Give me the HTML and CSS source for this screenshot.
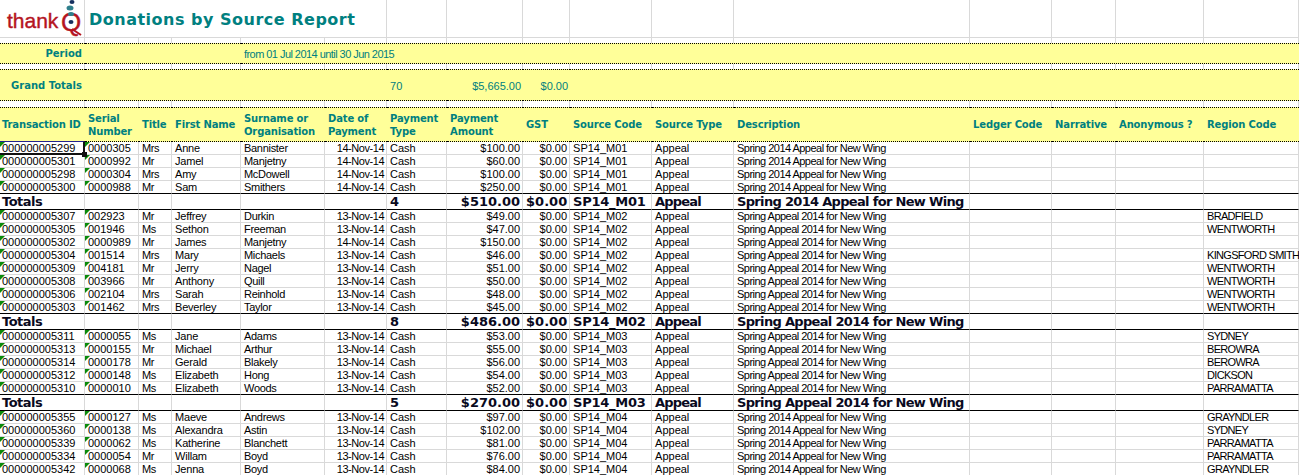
FILE: index.html
```html
<!DOCTYPE html>
<html lang="en">
<head>
  <meta charset="UTF-8">
  <title>Donations by Source Report</title>
  <link rel="stylesheet" href="styles.css">
</head>
<body>
  <table class="sheet">
    <colgroup>
      <col class="c85"><col class="c54"><col class="c33"><col class="c69"><col class="c84"><col class="c62"><col class="c60"><col class="c76">
      <col class="c47"><col class="c82"><col class="c82"><col class="c236"><col class="c82"><col class="c64"><col class="c88"><col class="c95">
    </colgroup>

    <!-- report heading -->
    <tr class="title-row">
      <td>
        <svg class="logo" width="84" height="37" viewBox="0 0 84 37">
          <text class="logo-text" x="7" y="28">thank</text>
          <text class="logo-text logo-q" x="61" y="31">Q</text>
          <path class="logo-tail" d="M72 29 L81 35"/>
          <ellipse class="logo-dot" cx="72" cy="2" rx="2.5" ry="2"/>
          <ellipse class="logo-dot-teal" cx="70" cy="8" rx="3.5" ry="2.5"/>
          <ellipse class="logo-dot-teal" cx="71" cy="14" rx="3" ry="2"/>
          <ellipse class="logo-dot" cx="71" cy="22" rx="2.5" ry="2"/>
        </svg>
      </td>
      <td colspan="5" class="report-title">Donations by Source Report</td>
      <td></td><td></td><td></td><td></td><td></td><td></td><td></td><td></td><td></td><td></td>
    </tr>
    <tr class="gap g5"><td></td><td></td><td></td><td></td><td></td><td></td><td></td><td></td><td></td><td></td><td></td><td></td><td></td><td></td><td></td><td></td></tr>

    <tr class="band band-period">
      <td class="lbl">Period</td>
      <td colspan="3"></td>
      <td colspan="12" class="val">from 01 Jul 2014 until 30 Jun 2015</td>
    </tr>
    <tr class="gap g5"><td></td><td></td><td></td><td></td><td></td><td></td><td></td><td></td><td></td><td></td><td></td><td></td><td></td><td></td><td></td><td></td></tr>

    <tr class="band band-totals">
      <td class="lbl">Grand Totals</td>
      <td colspan="5"></td>
      <td class="val">70</td>
      <td class="val num">$5,665.00</td>
      <td class="val num">$0.00</td>
      <td colspan="7"></td>
    </tr>
    <tr class="gap g6"><td></td><td></td><td></td><td></td><td></td><td></td><td></td><td></td><td></td><td></td><td></td><td></td><td></td><td></td><td></td><td></td></tr>

    <tr class="band band-head">
      <th class="first">Transaction ID</th><th>Serial<br>Number</th><th>Title</th><th>First Name</th><th>Surname or<br>Organisation</th><th>Date of<br>Payment</th><th>Payment<br>Type</th><th>Payment<br>Amount</th>
      <th>GST</th><th>Source Code</th><th>Source Type</th><th>Description</th><th>Ledger Code</th><th>Narrative</th><th>Anonymous ?</th><th>Region Code</th>
    </tr>

    <!-- SP14_M01 -->
    <tr><td class="id flag selected">000000005299<span class="handle"></span></td><td class="flag">0000305</td><td>Mrs</td><td>Anne</td><td>Bannister</td><td class="num">14-Nov-14</td><td>Cash</td><td class="num">$100.00</td><td class="num">$0.00</td><td>SP14_M01</td><td>Appeal</td><td>Spring 2014 Appeal for New Wing</td><td></td><td></td><td></td><td></td></tr>
    <tr><td class="id flag">000000005301</td><td class="flag">0000992</td><td>Mr</td><td>Jamel</td><td>Manjetny</td><td class="num">14-Nov-14</td><td>Cash</td><td class="num">$60.00</td><td class="num">$0.00</td><td>SP14_M01</td><td>Appeal</td><td>Spring 2014 Appeal for New Wing</td><td></td><td></td><td></td><td></td></tr>
    <tr><td class="id flag">000000005298</td><td class="flag">0000304</td><td>Mrs</td><td>Amy</td><td>McDowell</td><td class="num">14-Nov-14</td><td>Cash</td><td class="num">$100.00</td><td class="num">$0.00</td><td>SP14_M01</td><td>Appeal</td><td>Spring 2014 Appeal for New Wing</td><td></td><td></td><td></td><td></td></tr>
    <tr class="last"><td class="id flag">000000005300</td><td class="flag">0000988</td><td>Mr</td><td>Sam</td><td>Smithers</td><td class="num">14-Nov-14</td><td>Cash</td><td class="num">$250.00</td><td class="num">$0.00</td><td>SP14_M01</td><td>Appeal</td><td>Spring 2014 Appeal for New Wing</td><td></td><td></td><td></td><td></td></tr>
    <tr class="totals"><td class="id">Totals</td><td></td><td></td><td></td><td></td><td></td><td>4</td><td class="num">$510.00</td><td class="num">$0.00</td><td>SP14_M01</td><td>Appeal</td><td>Spring 2014 Appeal for New Wing</td><td></td><td></td><td></td><td></td></tr>

    <!-- SP14_M02 -->
    <tr><td class="id flag">000000005307</td><td class="flag">002923</td><td>Mr</td><td>Jeffrey</td><td>Durkin</td><td class="num">13-Nov-14</td><td>Cash</td><td class="num">$49.00</td><td class="num">$0.00</td><td>SP14_M02</td><td>Appeal</td><td>Spring Appeal 2014 for New Wing</td><td></td><td></td><td></td><td>BRADFIELD</td></tr>
    <tr><td class="id flag">000000005305</td><td class="flag">001946</td><td>Ms</td><td>Sethon</td><td>Freeman</td><td class="num">13-Nov-14</td><td>Cash</td><td class="num">$47.00</td><td class="num">$0.00</td><td>SP14_M02</td><td>Appeal</td><td>Spring Appeal 2014 for New Wing</td><td></td><td></td><td></td><td>WENTWORTH</td></tr>
    <tr><td class="id flag">000000005302</td><td class="flag">0000989</td><td>Mr</td><td>James</td><td>Manjetny</td><td class="num">14-Nov-14</td><td>Cash</td><td class="num">$150.00</td><td class="num">$0.00</td><td>SP14_M02</td><td>Appeal</td><td>Spring Appeal 2014 for New Wing</td><td></td><td></td><td></td><td></td></tr>
    <tr><td class="id flag">000000005304</td><td class="flag">001514</td><td>Mrs</td><td>Mary</td><td>Michaels</td><td class="num">13-Nov-14</td><td>Cash</td><td class="num">$46.00</td><td class="num">$0.00</td><td>SP14_M02</td><td>Appeal</td><td>Spring Appeal 2014 for New Wing</td><td></td><td></td><td></td><td>KINGSFORD SMITH</td></tr>
    <tr><td class="id flag">000000005309</td><td class="flag">004181</td><td>Mr</td><td>Jerry</td><td>Nagel</td><td class="num">13-Nov-14</td><td>Cash</td><td class="num">$51.00</td><td class="num">$0.00</td><td>SP14_M02</td><td>Appeal</td><td>Spring Appeal 2014 for New Wing</td><td></td><td></td><td></td><td>WENTWORTH</td></tr>
    <tr><td class="id flag">000000005308</td><td class="flag">003966</td><td>Mr</td><td>Anthony</td><td>Quill</td><td class="num">13-Nov-14</td><td>Cash</td><td class="num">$50.00</td><td class="num">$0.00</td><td>SP14_M02</td><td>Appeal</td><td>Spring Appeal 2014 for New Wing</td><td></td><td></td><td></td><td>WENTWORTH</td></tr>
    <tr><td class="id flag">000000005306</td><td class="flag">002104</td><td>Mrs</td><td>Sarah</td><td>Reinhold</td><td class="num">13-Nov-14</td><td>Cash</td><td class="num">$48.00</td><td class="num">$0.00</td><td>SP14_M02</td><td>Appeal</td><td>Spring Appeal 2014 for New Wing</td><td></td><td></td><td></td><td>WENTWORTH</td></tr>
    <tr class="last"><td class="id flag">000000005303</td><td class="flag">001462</td><td>Mrs</td><td>Beverley</td><td>Taylor</td><td class="num">13-Nov-14</td><td>Cash</td><td class="num">$45.00</td><td class="num">$0.00</td><td>SP14_M02</td><td>Appeal</td><td>Spring Appeal 2014 for New Wing</td><td></td><td></td><td></td><td>WENTWORTH</td></tr>
    <tr class="totals"><td class="id">Totals</td><td></td><td></td><td></td><td></td><td></td><td>8</td><td class="num">$486.00</td><td class="num">$0.00</td><td>SP14_M02</td><td>Appeal</td><td>Spring Appeal 2014 for New Wing</td><td></td><td></td><td></td><td></td></tr>

    <!-- SP14_M03 -->
    <tr><td class="id flag">000000005311</td><td class="flag">0000055</td><td>Ms</td><td>Jane</td><td>Adams</td><td class="num">13-Nov-14</td><td>Cash</td><td class="num">$53.00</td><td class="num">$0.00</td><td>SP14_M03</td><td>Appeal</td><td>Spring Appeal 2014 for New Wing</td><td></td><td></td><td></td><td>SYDNEY</td></tr>
    <tr><td class="id flag">000000005313</td><td class="flag">0000155</td><td>Mr</td><td>Michael</td><td>Arthur</td><td class="num">13-Nov-14</td><td>Cash</td><td class="num">$55.00</td><td class="num">$0.00</td><td>SP14_M03</td><td>Appeal</td><td>Spring Appeal 2014 for New Wing</td><td></td><td></td><td></td><td>BEROWRA</td></tr>
    <tr><td class="id flag">000000005314</td><td class="flag">0000178</td><td>Mr</td><td>Gerald</td><td>Blakely</td><td class="num">13-Nov-14</td><td>Cash</td><td class="num">$56.00</td><td class="num">$0.00</td><td>SP14_M03</td><td>Appeal</td><td>Spring Appeal 2014 for New Wing</td><td></td><td></td><td></td><td>BEROWRA</td></tr>
    <tr><td class="id flag">000000005312</td><td class="flag">0000148</td><td>Ms</td><td>Elizabeth</td><td>Hong</td><td class="num">13-Nov-14</td><td>Cash</td><td class="num">$54.00</td><td class="num">$0.00</td><td>SP14_M03</td><td>Appeal</td><td>Spring Appeal 2014 for New Wing</td><td></td><td></td><td></td><td>DICKSON</td></tr>
    <tr class="last"><td class="id flag">000000005310</td><td class="flag">0000010</td><td>Ms</td><td>Elizabeth</td><td>Woods</td><td class="num">13-Nov-14</td><td>Cash</td><td class="num">$52.00</td><td class="num">$0.00</td><td>SP14_M03</td><td>Appeal</td><td>Spring Appeal 2014 for New Wing</td><td></td><td></td><td></td><td>PARRAMATTA</td></tr>
    <tr class="totals"><td class="id">Totals</td><td></td><td></td><td></td><td></td><td></td><td>5</td><td class="num">$270.00</td><td class="num">$0.00</td><td>SP14_M03</td><td>Appeal</td><td>Spring Appeal 2014 for New Wing</td><td></td><td></td><td></td><td></td></tr>

    <!-- SP14_M04 -->
    <tr><td class="id flag">000000005355</td><td class="flag">0000127</td><td>Ms</td><td>Maeve</td><td>Andrews</td><td class="num">13-Nov-14</td><td>Cash</td><td class="num">$97.00</td><td class="num">$0.00</td><td>SP14_M04</td><td>Appeal</td><td>Spring 2014 Appeal for New Wing</td><td></td><td></td><td></td><td>GRAYNDLER</td></tr>
    <tr><td class="id flag">000000005360</td><td class="flag">0000138</td><td>Ms</td><td>Alexandra</td><td>Astin</td><td class="num">13-Nov-14</td><td>Cash</td><td class="num">$102.00</td><td class="num">$0.00</td><td>SP14_M04</td><td>Appeal</td><td>Spring 2014 Appeal for New Wing</td><td></td><td></td><td></td><td>SYDNEY</td></tr>
    <tr><td class="id flag">000000005339</td><td class="flag">0000062</td><td>Ms</td><td>Katherine</td><td>Blanchett</td><td class="num">13-Nov-14</td><td>Cash</td><td class="num">$81.00</td><td class="num">$0.00</td><td>SP14_M04</td><td>Appeal</td><td>Spring 2014 Appeal for New Wing</td><td></td><td></td><td></td><td>PARRAMATTA</td></tr>
    <tr><td class="id flag">000000005334</td><td class="flag">0000054</td><td>Mr</td><td>Willam</td><td>Boyd</td><td class="num">13-Nov-14</td><td>Cash</td><td class="num">$76.00</td><td class="num">$0.00</td><td>SP14_M04</td><td>Appeal</td><td>Spring 2014 Appeal for New Wing</td><td></td><td></td><td></td><td>PARRAMATTA</td></tr>
    <tr><td class="id flag">000000005342</td><td class="flag">0000068</td><td>Ms</td><td>Jenna</td><td>Boyd</td><td class="num">13-Nov-14</td><td>Cash</td><td class="num">$84.00</td><td class="num">$0.00</td><td>SP14_M04</td><td>Appeal</td><td>Spring 2014 Appeal for New Wing</td><td></td><td></td><td></td><td>GRAYNDLER</td></tr>
  </table>
</body>
</html>
```

FILE: styles.css
```css
html, body {
  height: 475px;
  overflow: hidden;
}

body {
  margin: 0;
  background-color: #fff;
  font-family: "Liberation Sans", Arial, sans-serif;
  font-size: 11px;
  color: #000;
}

.sheet {
  table-layout: fixed;
  width: 1299px;
  border-collapse: separate;
  border-spacing: 0;
}

.c33 { width: 33px; }
.c47 { width: 47px; }
.c54 { width: 54px; }
.c60 { width: 60px; }
.c62 { width: 62px; }
.c64 { width: 64px; }
.c69 { width: 69px; }
.c76 { width: 76px; }
.c82 { width: 82px; }
.c84 { width: 84px; }
.c85 { width: 85px; }
.c88 { width: 88px; }
.c95 { width: 95px; }
.c236 { width: 236px; }

.sheet td,
.sheet th {
  box-sizing: border-box;
  height: 13px;
  padding: 0 2px 0 3px;
  border-right: 1px solid #d9d9d9;
  border-bottom: 1px solid #d9d9d9;
  line-height: 12px;
  white-space: nowrap;
  overflow: visible;
  position: relative;
  text-align: left;
  vertical-align: middle;
}

.sheet td.num {
  text-align: right;
}

.sheet td.id {
  padding-left: 2px;
}

/* the screen font of the sheet is narrower than Liberation for words */
.sheet tr:not(.band) > td:nth-child(3) { letter-spacing: -0.4px; }
.sheet tr:not(.band) > td:nth-child(4) { letter-spacing: -0.2px; }
.sheet tr:not(.band) > td:nth-child(5) { letter-spacing: -0.3px; }
.sheet tr:not(.band) > td:nth-child(6) { letter-spacing: -0.45px; }
.sheet tr:not(.band) > td:nth-child(12) { letter-spacing: -0.53px; }
.sheet tr:not(.band) > td:nth-child(16) { letter-spacing: -0.7px; }

/* heading row */
.title-row td {
  height: 38px;
  padding: 0;
}

.logo {
  display: block;
}

.logo-text {
  font-family: "Liberation Sans", Arial, sans-serif;
  font-size: 21px;
  fill: #b5141f;
  stroke: #b5141f;
  stroke-width: 0.4;
}

.logo-q {
  font-size: 26px;
}

.logo-tail {
  stroke: #b5141f;
  stroke-width: 2;
  fill: none;
}

.logo-dot {
  fill: #16305f;
}

.logo-dot-teal {
  fill: #2f7f8c;
}

.sheet .report-title {
  padding: 2px 0 0 4px;
  font-family: "DejaVu Sans", Verdana, sans-serif;
  font-size: 16px;
  font-weight: bold;
  color: #008080;
  letter-spacing: 0.5px;
}

/* blank rows between the yellow bands */
.gap.g5 td { height: 5px; }
.gap.g6 td { height: 6px; }

.gap td {
  border-bottom: 0;
  line-height: 0;
}

/* yellow bands */
.band td,
.band th {
  background-color: #ffff99;
  color: #008080;
  border-right: 0;
  border-top: 1px dotted #000;
  border-bottom: 1px dotted #000;
}

.band-period td { height: 21px; }
.band-totals td { height: 32px; padding-top: 1px; }
.band-head th { height: 35px; }

.band-period .val {
  letter-spacing: -0.55px;
}

.band .lbl {
  padding-right: 3px;
  text-align: right;
  font-family: "DejaVu Sans", Verdana, sans-serif;
  font-size: 10px;
  font-weight: bold;
}

.band th {
  font-family: "DejaVu Sans", Verdana, sans-serif;
  font-size: 10px;
  font-weight: bold;
  line-height: 13px;
  letter-spacing: -0.15px;
}

.band th.first {
  padding-left: 2px;
}

/* subtotal rows */
.last td {
  border-bottom: 1px solid #000;
}

.sheet .totals td {
  height: 16px;
  border-bottom: 1px solid #000;
  font-family: "DejaVu Sans", Verdana, sans-serif;
  font-size: 13px;
  font-weight: bold;
  color: #0a0a1e;
}

.sheet tr.totals > td:nth-child(1) { letter-spacing: -0.5px; }
.sheet tr.totals > td:nth-child(10) { letter-spacing: -0.25px; }
.sheet tr.totals > td:nth-child(11) { letter-spacing: -0.8px; }
.sheet tr.totals > td:nth-child(12) { letter-spacing: -0.68px; }

/* excel "number stored as text" marker */
.flag::before {
  content: "";
  position: absolute;
  left: 0;
  top: 0;
  border-top: 5px solid #0a8a0a;
  border-right: 5px solid transparent;
}

.selected::after {
  content: "";
  position: absolute;
  left: 0;
  top: -1px;
  right: -1px;
  bottom: -1px;
  border-right: 2px solid #111;
  border-bottom: 2px solid #111;
  border-top: 1px solid #23238e;
}

.handle {
  position: absolute;
  right: -3px;
  bottom: -3px;
  width: 5px;
  height: 5px;
  background-color: #111;
  z-index: 1;
}
```
